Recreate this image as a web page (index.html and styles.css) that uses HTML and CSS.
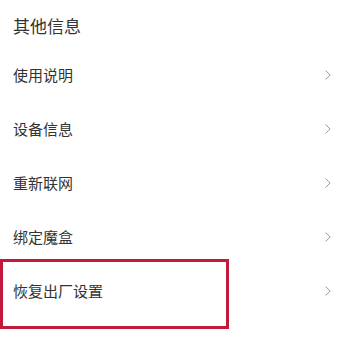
FILE: index.html
```html
<!DOCTYPE html>
<html lang="zh">
<head>
<meta charset="utf-8">
<link rel="stylesheet" href="styles.css">
</head>
<body>
<div class="page">
  <div class="heading">其他信息</div>
  <div class="list">
    <div class="row"><span class="label">使用说明</span><svg class="chev" width="6" height="10" viewBox="0 0 6 10"><path d="M0.6 0.6 L5.2 5 L0.6 9.4" fill="none" stroke="#9a9a9a" stroke-width="1"/></svg></div>
    <div class="row"><span class="label">设备信息</span><svg class="chev" width="6" height="10" viewBox="0 0 6 10"><path d="M0.6 0.6 L5.2 5 L0.6 9.4" fill="none" stroke="#9a9a9a" stroke-width="1"/></svg></div>
    <div class="row"><span class="label">重新联网</span><svg class="chev" width="6" height="10" viewBox="0 0 6 10"><path d="M0.6 0.6 L5.2 5 L0.6 9.4" fill="none" stroke="#9a9a9a" stroke-width="1"/></svg></div>
    <div class="row"><span class="label">绑定魔盒</span><svg class="chev" width="6" height="10" viewBox="0 0 6 10"><path d="M0.6 0.6 L5.2 5 L0.6 9.4" fill="none" stroke="#9a9a9a" stroke-width="1"/></svg></div>
    <div class="row"><span class="label">恢复出厂设置</span><svg class="chev" width="6" height="10" viewBox="0 0 6 10"><path d="M0.6 0.6 L5.2 5 L0.6 9.4" fill="none" stroke="#9a9a9a" stroke-width="1"/></svg></div>
  </div>
  <div class="highlight"></div>
</div>
</body>
</html>
```
FILE: styles.css
```css
html, body {
  margin: 0;
  padding: 0;
  background: #ffffff;
}
.page {
  position: relative;
  width: 344px;
  height: 357px;
  font-family: "Noto Sans CJK SC", "Noto Sans", sans-serif;
  color: #333333;
}
.heading {
  height: 48px;
  box-sizing: border-box;
  padding: 6px 0 0 13px;
  line-height: 40px;
  font-size: 17px;
}
.list {
  display: flex;
  flex-direction: column;
}
.row {
  height: 54px;
  display: flex;
  align-items: center;
  justify-content: space-between;
  padding: 0 13px 0 13px;
  font-size: 15px;
}
.label {
  line-height: 20px;
}
.chev {
  display: block;
}
.highlight {
  position: absolute;
  left: 0;
  top: 259px;
  width: 229px;
  height: 70px;
  box-sizing: border-box;
  border: 3px solid #c21a3c;
}
```
